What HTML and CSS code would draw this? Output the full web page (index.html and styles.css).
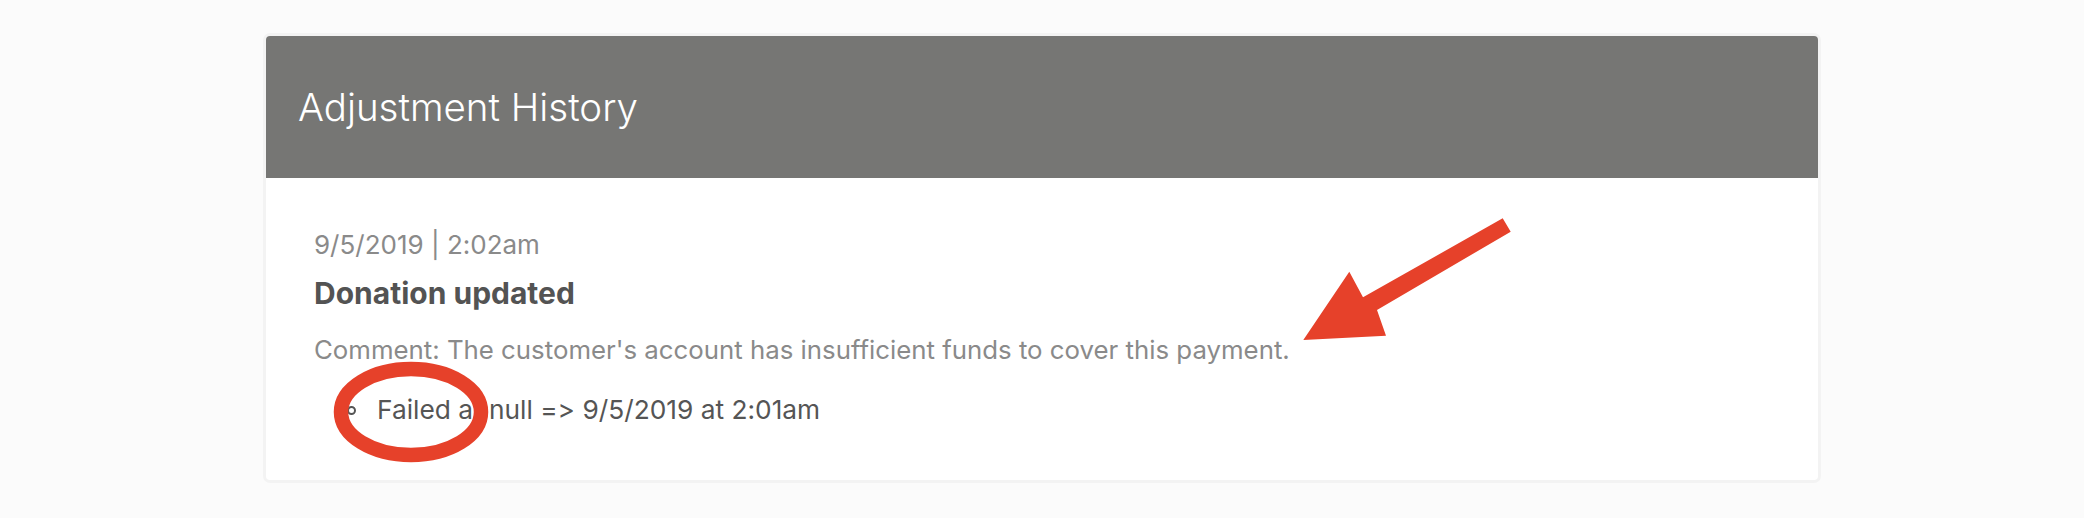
FILE: index.html
```html
<!DOCTYPE html>
<html lang="en">
<head>
<meta charset="utf-8">
<title>Adjustment History</title>
<link rel="stylesheet" href="styles.css">
</head>
<body>
<main class="page">
  <section class="card">
    <header class="card-header">
      <h2 class="card-title">Adjustment History</h2>
    </header>
    <div class="card-body">
      <div class="entry-date">9/5/2019 | 2:02am</div>
      <div class="entry-title">Donation updated</div>
      <div class="entry-comment">Comment: The customer's account has insufficient funds to cover this payment.</div>
      <ul class="changes">
        <li class="change">Failed at null =&gt; 9/5/2019 at 2:01am</li>
      </ul>
    </div>
  </section>
  <svg class="annotations" width="2084" height="518" viewBox="0 0 2084 518" aria-hidden="true">
    <polygon class="arrow" points="1502.7,218.3 1510.7,231.7 1377,310 1386,335.7 1303.3,340 1349.3,271.7 1363,297.3"/>
    <ellipse class="ring" cx="411" cy="412" rx="70" ry="43"/>
  </svg>
</main>
</body>
</html>
```
FILE: styles.css
```css
html, body {
  margin: 0;
  padding: 0;
}
body {
  background: #fbfbfb;
  font-family: "Inter", "Roboto", "Liberation Sans", sans-serif;
  font-variant-ligatures: none;
  font-feature-settings: "calt" 0, "liga" 0;
}
.page {
  position: relative;
  width: 2084px;
  height: 518px;
  padding-top: 36px;
  box-sizing: border-box;
}
.card {
  margin-left: 266px;
  width: 1552px;
  height: 444px;
  background: #ffffff;
  border-radius: 4px;
  box-shadow: 0 0 0 3px #f3f3f3;
  overflow: hidden;
}
.card-header {
  height: 142px;
  background: #767674;
  display: flex;
  align-items: center;
  padding-left: 32px;
}
.card-title {
  margin: 0;
  font-size: 38.5px;
  font-weight: 300;
  color: #ffffff;
  line-height: 1;
}
.card-body {
  padding: 49px 48px 0 48px;
}
.entry-date {
  font-size: 26px;
  line-height: 36px;
  color: #8a8a8a;
}
.entry-title {
  margin-top: 10px;
  font-size: 30px;
  line-height: 40px;
  font-weight: 700;
  color: #535353;
}
.entry-comment {
  margin-top: 19px;
  font-size: 25.8px;
  line-height: 36px;
  color: #8a8a8a;
}
.changes {
  list-style: none;
  margin: 24px 0 0 0;
  padding: 0 0 0 33px;
}
.change {
  display: flex;
  align-items: center;
  gap: 21px;
  font-size: 26.3px;
  line-height: 36px;
  color: #555555;
}
.change::before {
  content: "";
  width: 9px;
  height: 9px;
  border: 2px solid #555555;
  border-radius: 50%;
  box-sizing: border-box;
  flex: none;
}
.annotations {
  position: absolute;
  left: 0;
  top: 0;
  pointer-events: none;
}
.arrow {
  fill: #e6412a;
}
.ring {
  fill: none;
  stroke: #e6412a;
  stroke-width: 14.5;
}
```
